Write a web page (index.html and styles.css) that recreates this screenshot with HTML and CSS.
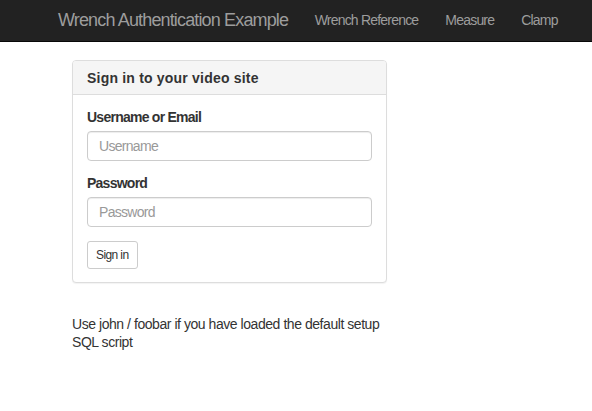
FILE: index.html
```html
<!DOCTYPE html>
<html>
<head>
<meta charset="utf-8">
<title>Wrench Authentication Example</title>
<link rel="stylesheet" href="styles.css">
</head>
<body>
<nav class="navbar">
  <a class="brand" href="#">Wrench Authentication Example</a>
  <ul class="nav">
    <li><a href="#">Wrench Reference</a></li>
    <li><a href="#">Measure</a></li>
    <li><a href="#">Clamp</a></li>
  </ul>
</nav>
<main class="main">
  <section class="panel">
    <div class="panel-heading"><h3 class="panel-title">Sign in to your video site</h3></div>
    <form class="panel-body">
      <div class="form-group">
        <label class="label" for="u">Username or Email</label>
        <input class="input" id="u" type="text" placeholder="Username">
      </div>
      <div class="form-group">
        <label class="label" for="p">Password</label>
        <input class="input" id="p" type="password" placeholder="Password">
      </div>
      <button class="btn" type="button">Sign in</button>
    </form>
  </section>
  <p class="note">Use john / foobar if you have loaded the default setup SQL script</p>
</main>
</body>
</html>
```
FILE: styles.css
```css
* { box-sizing: border-box; }
html, body { margin: 0; padding: 0; }
body {
  font-family: "Liberation Sans", Arial, sans-serif;
  font-size: 14px;
  line-height: 20px;
  color: #333;
  background: #fff;
}
.navbar {
  display: flex;
  align-items: center;
  height: 42px;
  background: #222;
  border-bottom: 1px solid #080808;
  padding-left: 58px;
  padding-bottom: 1px;
  white-space: nowrap;
}
.brand {
  font-size: 18px;
  letter-spacing: -0.85px;
  color: #9d9d9d;
  text-decoration: none;
  margin-right: 13px;
}
.nav {
  display: flex;
  list-style: none;
  margin: 0;
  padding: 0;
}
.nav a {
  display: block;
  padding: 0 13.5px;
  color: #9d9d9d;
  text-decoration: none;
  font-size: 14px;
  letter-spacing: -0.8px;
}
.main {
  width: 315px;
  margin-left: 72px;
  padding-top: 18px;
}
.panel {
  border: 1px solid #ddd;
  border-radius: 4px;
  box-shadow: 0 1px 1px rgba(0,0,0,.05);
  background: #fff;
}
.panel-heading {
  background: #f5f5f5;
  border-bottom: 1px solid #ddd;
  border-radius: 3px 3px 0 0;
  height: 34px;
  padding: 0 14px;
  display: flex;
  align-items: center;
}
.panel-title {
  margin: 0;
  font-size: 14px;
  font-weight: bold;
  letter-spacing: 0.2px;
  color: #333;
}
.panel-body {
  margin: 0;
  padding: 12px 14px 13px;
}
.form-group { margin-bottom: 12px; }
.label {
  display: block;
  font-weight: bold;
  letter-spacing: -0.75px;
  margin-bottom: 4px;
}
.input {
  display: block;
  width: 100%;
  height: 30px;
  padding: 4px 11px;
  font-family: inherit;
  font-size: 14px;
  letter-spacing: -0.7px;
  color: #555;
  border: 1px solid #ccc;
  border-radius: 4px;
  box-shadow: inset 0 1px 1px rgba(0,0,0,.075);
  background: #fff;
}
.input::placeholder { color: #999; }
.btn {
  display: block;
  margin-top: 14px;
  height: 28px;
  padding: 0 8px;
  font-family: inherit;
  font-size: 12px;
  letter-spacing: -0.6px;
  color: #333;
  background: #fff;
  border: 1px solid #ccc;
  border-radius: 3px;
}
.note {
  margin: 32px 0 0;
  line-height: 18px;
  letter-spacing: -0.45px;
}
```
